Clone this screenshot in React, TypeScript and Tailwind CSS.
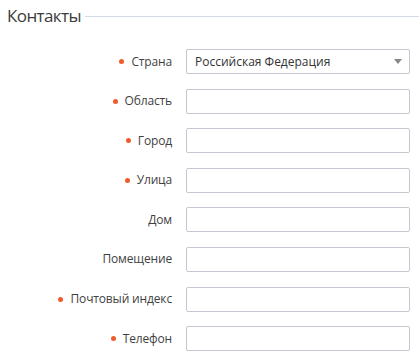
import React from "react";

interface Field {
  label: string;
  required: boolean;
  value?: string;
  select?: boolean;
}

const fields: Field[] = [
  { label: "Страна", required: true, value: "Российская Федерация", select: true },
  { label: "Область", required: true },
  { label: "Город", required: true },
  { label: "Улица", required: true },
  { label: "Дом", required: false },
  { label: "Помещение", required: false },
  { label: "Почтовый индекс", required: true },
  { label: "Телефон", required: true },
];

const App: React.FC = () => {
  return (
    <div className="w-[420px] h-[355px] bg-white font-['Open_Sans',sans-serif] text-[#333]">
      <div className="flex items-center pl-[7px] pr-[1px] pt-[5px]">
        <h2 className="text-[17px] leading-[22px] tracking-[-0.6px] text-[#3b3b3b] whitespace-nowrap">Контакты</h2>
        <div className="flex-1 h-px bg-[#d5dbe3] ml-[4px]"></div>
      </div>
      <form className="flex flex-col gap-[14.6px] mt-[22px] pr-[10px]">
        {fields.map((f) => (
          <div key={f.label} className="flex items-center h-[25px]">
            <div className="w-[172px] flex items-center justify-end text-[12px] text-[#3f3f3f] tracking-[-0.15px]">
              {f.required && <span className="w-[5px] h-[5px] rounded-full bg-[#f15a2b] mr-[7px]"></span>}
              <span>{f.label}</span>
            </div>
            <div className="ml-[14px] flex-1 h-[25px] border border-[#c3c8d0] rounded-[2px] flex items-center justify-between px-[8px] text-[12px] text-[#333]">
              <span>{f.value || ""}</span>
              {f.select && (
                <svg width="8" height="5" viewBox="0 0 8 5" className="mr-[-1px]">
                  <path d="M0 0 L8 0 L4 5 Z" fill="#888" />
                </svg>
              )}
            </div>
          </div>
        ))}
      </form>
    </div>
  );
};

export default App;
